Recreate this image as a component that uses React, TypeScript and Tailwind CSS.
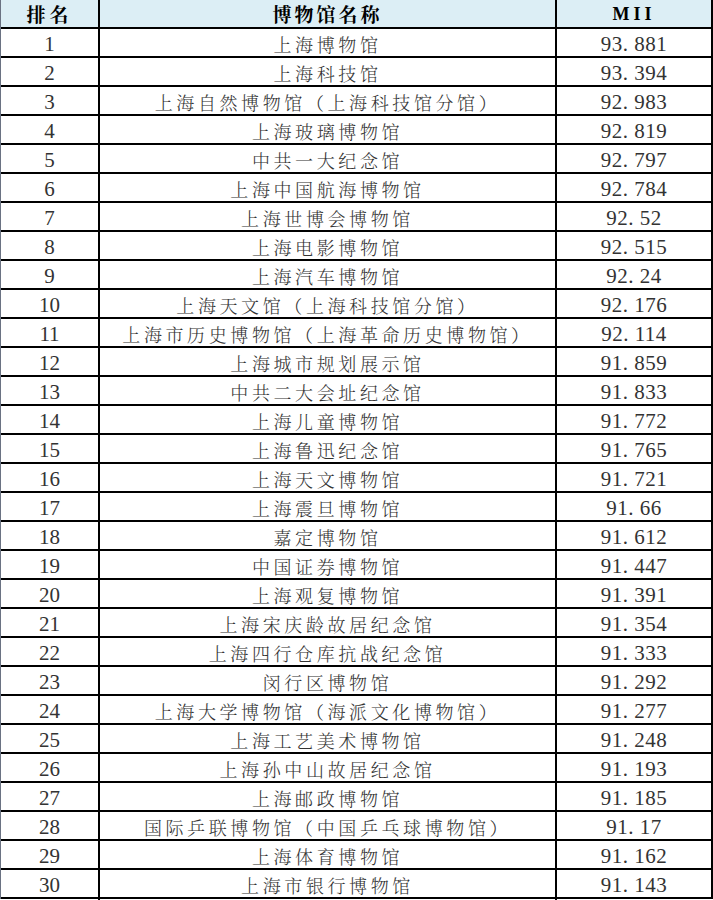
const rows: [number, string, string][] = [
  [1, '上海博物馆', '93.881'],
  [2, '上海科技馆', '93.394'],
  [3, '上海自然博物馆（上海科技馆分馆）', '92.983'],
  [4, '上海玻璃博物馆', '92.819'],
  [5, '中共一大纪念馆', '92.797'],
  [6, '上海中国航海博物馆', '92.784'],
  [7, '上海世博会博物馆', '92.52'],
  [8, '上海电影博物馆', '92.515'],
  [9, '上海汽车博物馆', '92.24'],
  [10, '上海天文馆（上海科技馆分馆）', '92.176'],
  [11, '上海市历史博物馆（上海革命历史博物馆）', '92.114'],
  [12, '上海城市规划展示馆', '91.859'],
  [13, '中共二大会址纪念馆', '91.833'],
  [14, '上海儿童博物馆', '91.772'],
  [15, '上海鲁迅纪念馆', '91.765'],
  [16, '上海天文博物馆', '91.721'],
  [17, '上海震旦博物馆', '91.66'],
  [18, '嘉定博物馆', '91.612'],
  [19, '中国证券博物馆', '91.447'],
  [20, '上海观复博物馆', '91.391'],
  [21, '上海宋庆龄故居纪念馆', '91.354'],
  [22, '上海四行仓库抗战纪念馆', '91.333'],
  [23, '闵行区博物馆', '91.292'],
  [24, '上海大学博物馆（海派文化博物馆）', '91.277'],
  [25, '上海工艺美术博物馆', '91.248'],
  [26, '上海孙中山故居纪念馆', '91.193'],
  [27, '上海邮政博物馆', '91.185'],
  [28, '国际乒联博物馆（中国乒乓球博物馆）', '91.17'],
  [29, '上海体育博物馆', '91.162'],
  [30, '上海市银行博物馆', '91.143'],
];

const cjk = "font-['Noto_Serif_CJK_SC','Noto_Sans_CJK_SC',serif]";

export default function App() {
  return (
    <div className="w-[713px] h-[900px] bg-white overflow-hidden">
      <div className="w-[713px] border-l border-r-2 border-l-gray-500 border-r-black">
        <div className="grid grid-cols-[99px_457px_1fr] h-[29px] bg-[#dceef5] border-b-2 border-black text-black font-bold">
          <div className={`${cjk} flex items-center justify-center text-[19px] tracking-[4px] border-r-2 border-black`}>排名</div>
          <div className={`${cjk} flex items-center justify-center text-[19px] tracking-[3px] border-r-2 border-black`}>博物馆名称</div>
          <div className="flex items-center justify-center font-['Liberation_Serif',serif] text-[18px] tracking-[4px]">MII</div>
        </div>
        {rows.map(([rank, name, mii]) => (
          <div key={rank} className="grid grid-cols-[99px_457px_1fr] h-[29px] border-b-2 border-black text-[#333]">
            <div className="flex items-center justify-center border-r-2 border-black font-['Liberation_Serif',serif] text-[21px]">{rank}</div>
            <div className={`${cjk} flex items-center justify-center border-r-2 border-black text-[18px] font-light tracking-[3.6px]`}>{name}</div>
            <div className="flex items-center justify-center font-['Liberation_Serif',serif] text-[21px] tracking-[0.5px]">{mii.replace('.', '. ')}</div>
          </div>
        ))}
      </div>
    </div>
  );
}
